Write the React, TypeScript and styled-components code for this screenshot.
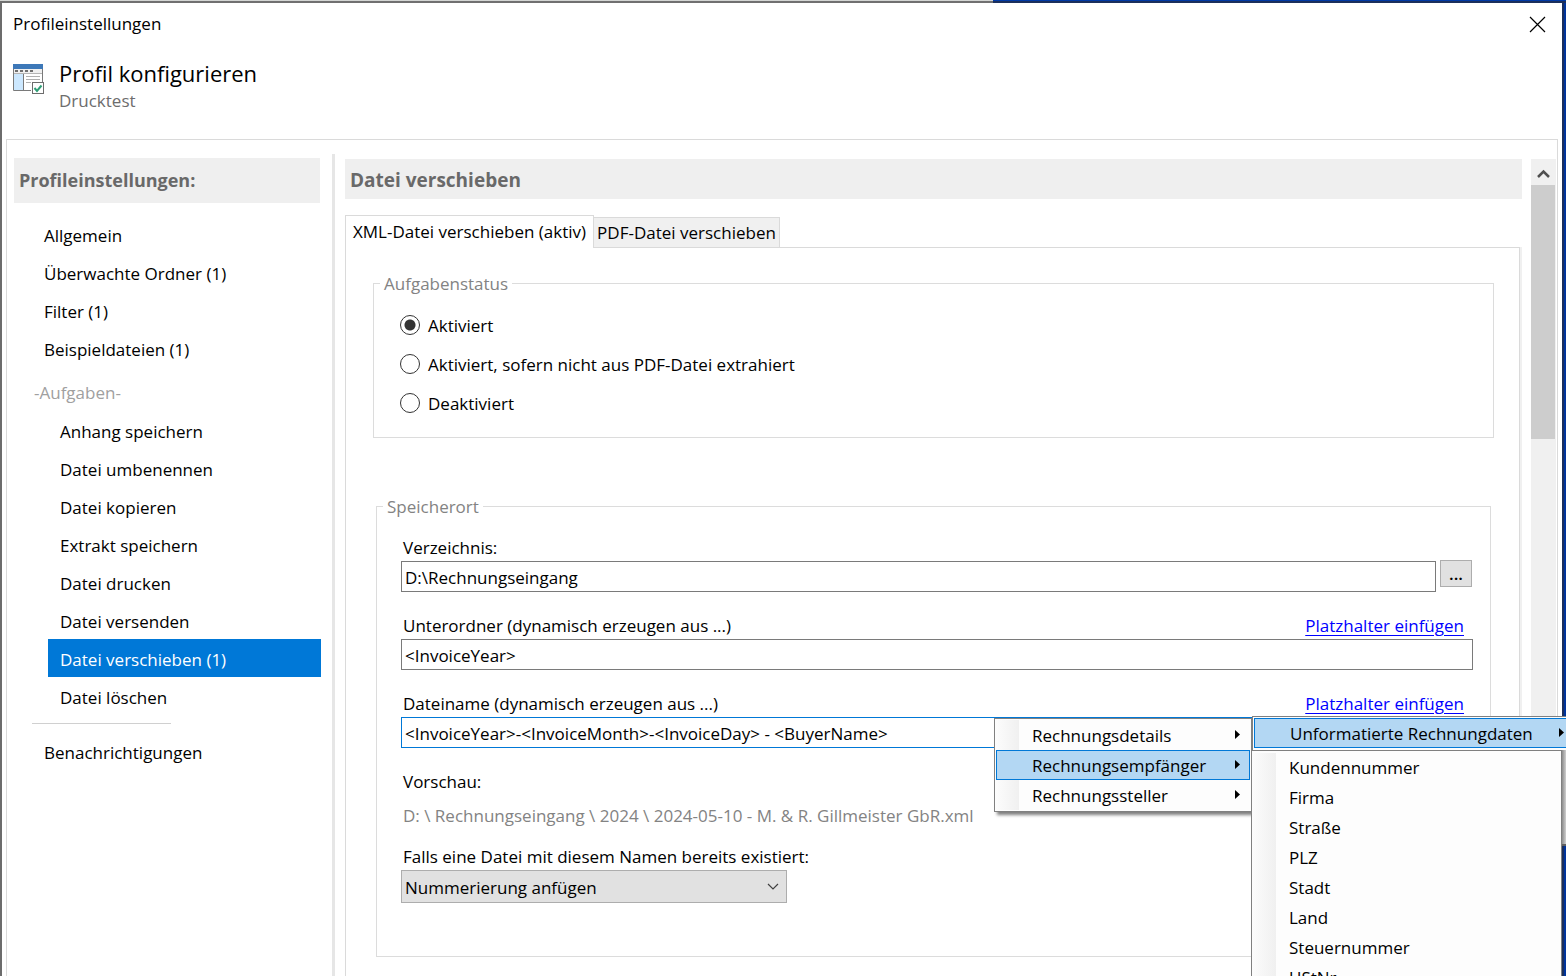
import React, { useState } from "react";
import styled, { createGlobalStyle } from "styled-components";

const GlobalStyle = createGlobalStyle`
  *, *::before, *::after { box-sizing: border-box; }
  html, body, #root { height: 100%; }
  body {
    margin: 0;
    overflow: hidden;
    color: #000;
    font-family: "Open Sans", "Noto Sans", sans-serif;
    font-size: 17px;
    line-height: 24px;
  }
  button, input, select { font: inherit; color: inherit; }
`;

const Desktop = styled.div`
  height: 100vh;
  overflow: hidden;
  display: flex;
  padding: 3px 4px 0 2px;
  background:
    linear-gradient(#d4d6d4 1px, #707070 1px) top left / 993px 3px no-repeat,
    linear-gradient(#0039a6 1px, #1b2f5c 1px) top right / 100% 3px no-repeat,
    linear-gradient(#6c6c6c, #6c6c6c) top left / 2px 100% no-repeat,
    linear-gradient(90deg, #1b2f5c 2px, #00349c 2px) top right / 4px 100% no-repeat,
    #fff;
`;

const Dialog = styled.main`
  flex: 1;
  display: flex;
  flex-direction: column;
  min-width: 0;
  background: #fff;
`;

const TitleBar = styled.header`
  display: flex;
  flex: none;
  align-items: center;
  justify-content: space-between;
  height: 42px;
  padding: 0 10px 0 11px;
`;

const CloseButton = styled.button`
  display: flex;
  padding: 6px;
  border: 0;
  background: none;
`;

const ProfileHeader = styled.section`
  display: flex;
  flex: none;
  gap: 14px;
  height: 94px;
  padding: 16px 11px;
`;

const ProfileTitle = styled.h1`
  margin: 0;
  font-size: 22px;
  line-height: 26px;
  font-weight: 400;
`;

const ProfileName = styled.p`
  margin: 3px 0 0;
  line-height: 24px;
  color: #6d6d6d;
`;

const HeaderText = styled.div`
  margin-top: -1px;
`;

const HeaderIcon = styled.svg`
  flex: none;
  margin-top: 3px;
`;

const Frame = styled.div`
  flex: 1;
  display: flex;
  margin: 0 4px;
  border: 1px solid #dadada;
  border-bottom: 0;
`;

const Sidebar = styled.nav`
  flex: none;
  width: 328px;
  margin-top: 14px;
  padding: 4px 12px 0 7px;
  border-right: 3px solid #e6e6e6;
`;

const SidebarHeading = styled.h2`
  margin: 0 0 12px;
  padding: 0 5px;
  font-size: 18px;
  line-height: 45px;
  color: #696969;
  background: #efefef;
`;

const NavItem = styled.button<{ $nested?: boolean; $active?: boolean }>`
  display: block;
  width: ${p => (p.$nested ? "calc(100% - 33px)" : "calc(100% - 18px)")};
  height: 38px;
  margin-left: ${p => (p.$nested ? "34px" : "18px")};
  padding: 3px 12px 0;
  border: 0;
  text-align: left;
  white-space: nowrap;
  color: ${p => (p.$active ? "#fff" : "#000")};
  background: ${p => (p.$active ? "#0078d7" : "transparent")};
`;

const NavGroup = styled.div`
  height: 44px;
  padding: 14px 20px 0;
  color: #a0a0a0;
`;

const NavRule = styled.hr`
  width: 139px;
  margin: 8px 0 8px 18px;
  border: 0;
  border-top: 1px solid #d0d0d0;
`;

const Content = styled.section`
  flex: 1;
  min-width: 0;
  display: flex;
  flex-direction: column;
  padding: 19px 0 0 10px;
`;

const ContentHeading = styled.h2`
  height: 40px;
  margin: 0;
  padding: 2px 5px 0;
  font-size: 19px;
  line-height: 38px;
  color: #696969;
  background: #efefef;
`;

const TabList = styled.div`
  display: flex;
  align-items: flex-end;
  margin-top: 16px;
`;

const Tab = styled.button<{ $active?: boolean }>`
  height: ${p => (p.$active ? "33px" : "30px")};
  width: ${p => (p.$active ? "249px" : "186px")};
  padding: 0;
  margin-bottom: ${p => (p.$active ? "-1px" : "0")};
  position: relative;
  border: 1px solid #dadada;
  border-left-width: ${p => (p.$active ? "1px" : "0")};
  border-bottom: 0;
  white-space: nowrap;
  background: ${p => (p.$active ? "#fff" : "#f0f0f0")};
`;

const TabPanel = styled.div`
  flex: 1;
  padding: 22px 25px 40px 27px;
  border: 1px solid #dadada;
  border-bottom: 0;
  box-shadow: 2px 0 0 #f0f0f0;
  margin-right: 2px;
`;

const Group = styled.fieldset<{ $inset?: boolean }>`
  min-width: 0;
  margin: ${p => (p.$inset ? "55px 3px 0" : "0")};
  padding: 0 6px;
  border: 1px solid #dcdcdc;
`;

const GroupBody = styled.div<{ $inset?: boolean }>`
  padding: ${p => (p.$inset ? "16px 11px 53px 18px" : "10px 20px 14px")};
`;

const Legend = styled.legend`
  padding: 2px 4px 0;
  color: #838383;
`;

const RadioLabel = styled.label`
  display: flex;
  align-items: center;
  gap: 8px;
  height: 39px;
`;

const Radio = styled.input`
  appearance: none;
  width: 20px;
  height: 20px;
  margin: 0 0 2px;
  border: 1px solid #333;
  border-radius: 50%;
  background: #fff;
  &:checked {
    background: radial-gradient(circle, #333 5px, #fff 6px);
  }
`;

const Field = styled.div`
  margin-bottom: 21px;
`;

const LabelRow = styled.div`
  position: relative;
  display: flex;
  justify-content: space-between;
  height: 26px;
  padding: 0 9px 0 2px;
  line-height: 26px;
  white-space: nowrap;
`;

const PlaceholderLink = styled.a`
  color: #0000ff;
  text-underline-offset: 3px;
`;

const InputRow = styled.div`
  display: flex;
  align-items: flex-start;
  gap: 4px;
`;

const TextInput = styled.input<{ $focused?: boolean }>`
  flex: 1;
  min-width: 0;
  height: 31px;
  padding: 2px 3px 0;
  border: 1px solid ${p => (p.$focused ? "#0078d7" : "#7a7a7a")};
  border-radius: 0;
  background: #fff;
  outline: 0;
`;

const BrowseButton = styled.button`
  width: 32px;
  height: 27px;
  margin: -1px 1px 0 0;
  padding: 0;
  border: 1px solid #adadad;
  font-weight: 600;
  background: #e1e1e1;
`;

const Preview = styled.output`
  display: block;
  margin: 8px 0 15px 2px;
  line-height: 26px;
  color: #838383;
`;

const SelectBox = styled.div`
  display: grid;
  width: 386px;
  align-items: center;
  & > * { grid-area: 1 / 1; }
  & > svg { justify-self: end; margin-right: 8px; pointer-events: none; }
`;

const Select = styled.select`
  appearance: none;
  width: 100%;
  height: 33px;
  padding: 2px 3px 0;
  border: 1px solid #adadad;
  border-radius: 0;
  background: #e1e1e1;
`;

const ScrollTrack = styled.div`
  flex: none;
  width: 25px;
  margin: 19px 1px 0 9px;
  background: #f0f0f0;
`;

const ScrollUp = styled.button`
  display: flex;
  align-items: center;
  justify-content: center;
  width: 25px;
  height: 26px;
  padding: 3px 0 0;
  border: 0;
  background: none;
`;

const ScrollThumb = styled.div`
  width: 24px;
  height: 254px;
  background: #cdcdcd;
`;

const Flyouts = styled.div`
  position: absolute;
  z-index: 2;
  top: 25px;
  left: calc(100% - 479px);
  display: flex;
  align-items: flex-start;
  line-height: 24px;
`;

const Menu = styled.div`
  width: 258px;
  margin-top: 2px;
  padding: 1px;
  border: 1px solid #808080;
  background: linear-gradient(90deg, #fcfcfc, #f0f0f0) 1px 1px / 23px 90px no-repeat, #fdfdfd;
  box-shadow: 3px 3px 3px rgba(0, 0, 0, 0.5);
`;

const SubMenu = styled.div`
  flex: none;
  position: relative;
  width: 360px;
`;

const SubMenuHead = styled.div`
  height: 34px;
  padding: 1px 1px 2px;
  border: 1px solid #808080;
  border-bottom: 0;
  background: #fdfdfd;
`;

const SubMenuBody = styled.div`
  display: flex;
  align-items: flex-start;
  margin-left: -1px;
`;

const SubMenuList = styled.div`
  width: 311px;
  min-height: 260px;
  padding: 2px 0;
  border: 1px solid #808080;
  background: linear-gradient(90deg, #fcfcfc, #f0f0f0) 0 2px / 24px 100% no-repeat, #fdfdfd;
`;

const RearMenu = styled.div`
  flex: 1;
  height: 96px;
  border-bottom: 2px solid #606060;
  background: linear-gradient(90deg, #8c8c8c, #d0d0d0 4px, #fdfdfd 8px);
`;

const MenuItem = styled.button<{ $active?: boolean }>`
  display: flex;
  align-items: center;
  justify-content: space-between;
  width: 100%;
  height: 30px;
  padding: 2px 9px 0 35px;
  border: 1px solid ${p => (p.$active ? "#0078d7" : "transparent")};
  text-align: left;
  white-space: nowrap;
  background: ${p => (p.$active ? "#b3d7f3" : "transparent")};
  & > svg { margin-bottom: 3px; }
`;

const HeadItem = styled(MenuItem)`
  justify-content: flex-start;
  gap: 26px;
`;

const ListItem = styled(MenuItem)`
  padding: 0 9px 0 36px;
`;

const Arrow = () => (
  <svg width="5" height="9" viewBox="0 0 5 9" aria-hidden="true">
    <path d="M0 0L5 4.5L0 9Z" fill="#000" />
  </svg>
);

const ProfileIcon = () => (
  <HeaderIcon width="32" height="31" viewBox="0 0 32 31" aria-hidden="true">
    <path d="M0.5 1V26.5H18M29.5 1V18" fill="none" stroke="#7a7a7a" />
    <rect x="1" y="5" width="28" height="5" fill="#f0f0f0" />
    <rect width="30" height="5" fill="#3d78b8" />
    <path d="M2 7H5M7 7H10M12 7H15M17 7H20" stroke="#707070" strokeWidth="2" />
    <path d="M1 9.5H29" stroke="#b5b5b5" />
    <rect x="1" y="10" width="9.500" height="16" fill="#cce8ff" />
    <path d="M10.500 10V26" stroke="#7a7a7a" />
    <path d="M13 12.500H27M13 15.500H27M13 18.500H18" stroke="#b0b0b0" />
    <rect x="19.500" y="18.500" width="11" height="11" fill="#fff" stroke="#6d6d6d" />
    <path d="M21.500 24L24 27L28.500 21.500" fill="none" stroke="#2f9e76" strokeWidth="2" />
  </HeaderIcon>
);

const generalItems = ["Allgemein", "Überwachte Ordner (1)", "Filter (1)", "Beispieldateien (1)"];
const taskItems = [
  "Anhang speichern",
  "Datei umbenennen",
  "Datei kopieren",
  "Extrakt speichern",
  "Datei drucken",
  "Datei versenden",
  "Datei verschieben (1)",
  "Datei löschen",
];
const statusOptions = ["Aktiviert", "Aktiviert, sofern nicht aus PDF-Datei extrahiert", "Deaktiviert"];
const menuItems = ["Rechnungsdetails", "Rechnungsempfänger", "Rechnungssteller"];
const recipientFields = ["Kundennummer", "Firma", "Straße", "PLZ", "Stadt", "Land", "Steuernummer", "UStNr"];

export default function App() {
  const [section, setSection] = useState("Datei verschieben (1)");
  const [status, setStatus] = useState(statusOptions[0]);

  return (
    <Desktop>
      <GlobalStyle />
      <Dialog>
        <TitleBar>
          <span>Profileinstellungen</span>
          <CloseButton aria-label="Schließen">
            <svg width="17" height="17" viewBox="0 0 17 17" aria-hidden="true">
              <path d="M1 1L16 16M16 1L1 16" stroke="#000" strokeWidth="1.2" />
            </svg>
          </CloseButton>
        </TitleBar>
        <ProfileHeader>
          <ProfileIcon />
          <HeaderText>
            <ProfileTitle>Profil konfigurieren</ProfileTitle>
            <ProfileName>Drucktest</ProfileName>
          </HeaderText>
        </ProfileHeader>
        <Frame>
          <Sidebar>
            <SidebarHeading>Profileinstellungen:</SidebarHeading>
            {generalItems.map(item => (
              <NavItem key={item} $active={section === item} onClick={() => setSection(item)}>
                {item}
              </NavItem>
            ))}
            <NavGroup>-Aufgaben-</NavGroup>
            {taskItems.map(item => (
              <NavItem key={item} $nested $active={section === item} onClick={() => setSection(item)}>
                {item}
              </NavItem>
            ))}
            <NavRule />
            <NavItem>Benachrichtigungen</NavItem>
          </Sidebar>
          <Content>
            <ContentHeading>Datei verschieben</ContentHeading>
            <TabList role="tablist">
              <Tab role="tab" aria-selected $active>XML-Datei verschieben (aktiv)</Tab>
              <Tab role="tab" aria-selected={false}>PDF-Datei verschieben</Tab>
            </TabList>
            <TabPanel role="tabpanel">
              <Group>
                <Legend>Aufgabenstatus</Legend>
                <GroupBody>
                  {statusOptions.map(option => (
                    <RadioLabel key={option}>
                      <Radio
                        type="radio"
                        name="status"
                        checked={status === option}
                        onChange={() => setStatus(option)}
                      />
                      {option}
                    </RadioLabel>
                  ))}
                </GroupBody>
              </Group>
              <Group $inset>
                <Legend>Speicherort</Legend>
                <GroupBody $inset>
                  <Field>
                    <LabelRow>
                      <label htmlFor="directory">Verzeichnis:</label>
                    </LabelRow>
                    <InputRow>
                      <TextInput id="directory" defaultValue="D:\Rechnungseingang" />
                      <BrowseButton>...</BrowseButton>
                    </InputRow>
                  </Field>
                  <Field>
                    <LabelRow>
                      <label htmlFor="subfolder">Unterordner (dynamisch erzeugen aus ...)</label>
                      <PlaceholderLink href="#subfolder">Platzhalter einfügen</PlaceholderLink>
                    </LabelRow>
                    <InputRow>
                      <TextInput id="subfolder" defaultValue="<InvoiceYear>" />
                    </InputRow>
                  </Field>
                  <Field>
                    <LabelRow>
                      <label htmlFor="filename">Dateiname (dynamisch erzeugen aus ...)</label>
                      <PlaceholderLink href="#filename">Platzhalter einfügen</PlaceholderLink>
                      <Flyouts>
                        <Menu role="menu">
                          {menuItems.map(item => (
                            <MenuItem key={item} role="menuitem" $active={item === "Rechnungsempfänger"}>
                              {item}
                              <Arrow />
                            </MenuItem>
                          ))}
                        </Menu>
                        <SubMenu role="menu">
                          <SubMenuHead>
                            <HeadItem role="menuitem" $active>
                              Unformatierte Rechnungdaten
                              <Arrow />
                            </HeadItem>
                          </SubMenuHead>
                          <SubMenuBody>
                            <SubMenuList>
                              {recipientFields.map(item => (
                                <ListItem key={item} role="menuitem">{item}</ListItem>
                              ))}
                            </SubMenuList>
                            <RearMenu />
                          </SubMenuBody>
                        </SubMenu>
                      </Flyouts>
                    </LabelRow>
                    <InputRow>
                      <TextInput
                        id="filename"
                        $focused
                        defaultValue="<InvoiceYear>-<InvoiceMonth>-<InvoiceDay> - <BuyerName>"
                      />
                    </InputRow>
                  </Field>
                  <LabelRow>Vorschau:</LabelRow>
                  <Preview>D: \ Rechnungseingang \ 2024 \ 2024-05-10 - M. &amp; R. Gillmeister GbR.xml</Preview>
                  <LabelRow>
                    <label htmlFor="conflict">Falls eine Datei mit diesem Namen bereits existiert:</label>
                  </LabelRow>
                  <SelectBox>
                    <Select id="conflict">
                      <option>Nummerierung anfügen</option>
                    </Select>
                    <svg width="12" height="8" viewBox="0 0 12 8" aria-hidden="true">
                      <path d="M1 1L6 6L11 1" fill="none" stroke="#404040" strokeWidth="1.2" />
                    </svg>
                  </SelectBox>
                </GroupBody>
              </Group>
            </TabPanel>
          </Content>
          <ScrollTrack>
            <ScrollUp aria-label="Nach oben">
              <svg width="13" height="10" viewBox="0 0 13 10" aria-hidden="true">
                <path d="M1 8L6.500 2.500L12 8" fill="none" stroke="#505050" strokeWidth="2.500" />
              </svg>
            </ScrollUp>
            <ScrollThumb />
          </ScrollTrack>
        </Frame>
      </Dialog>
    </Desktop>
  );
}
